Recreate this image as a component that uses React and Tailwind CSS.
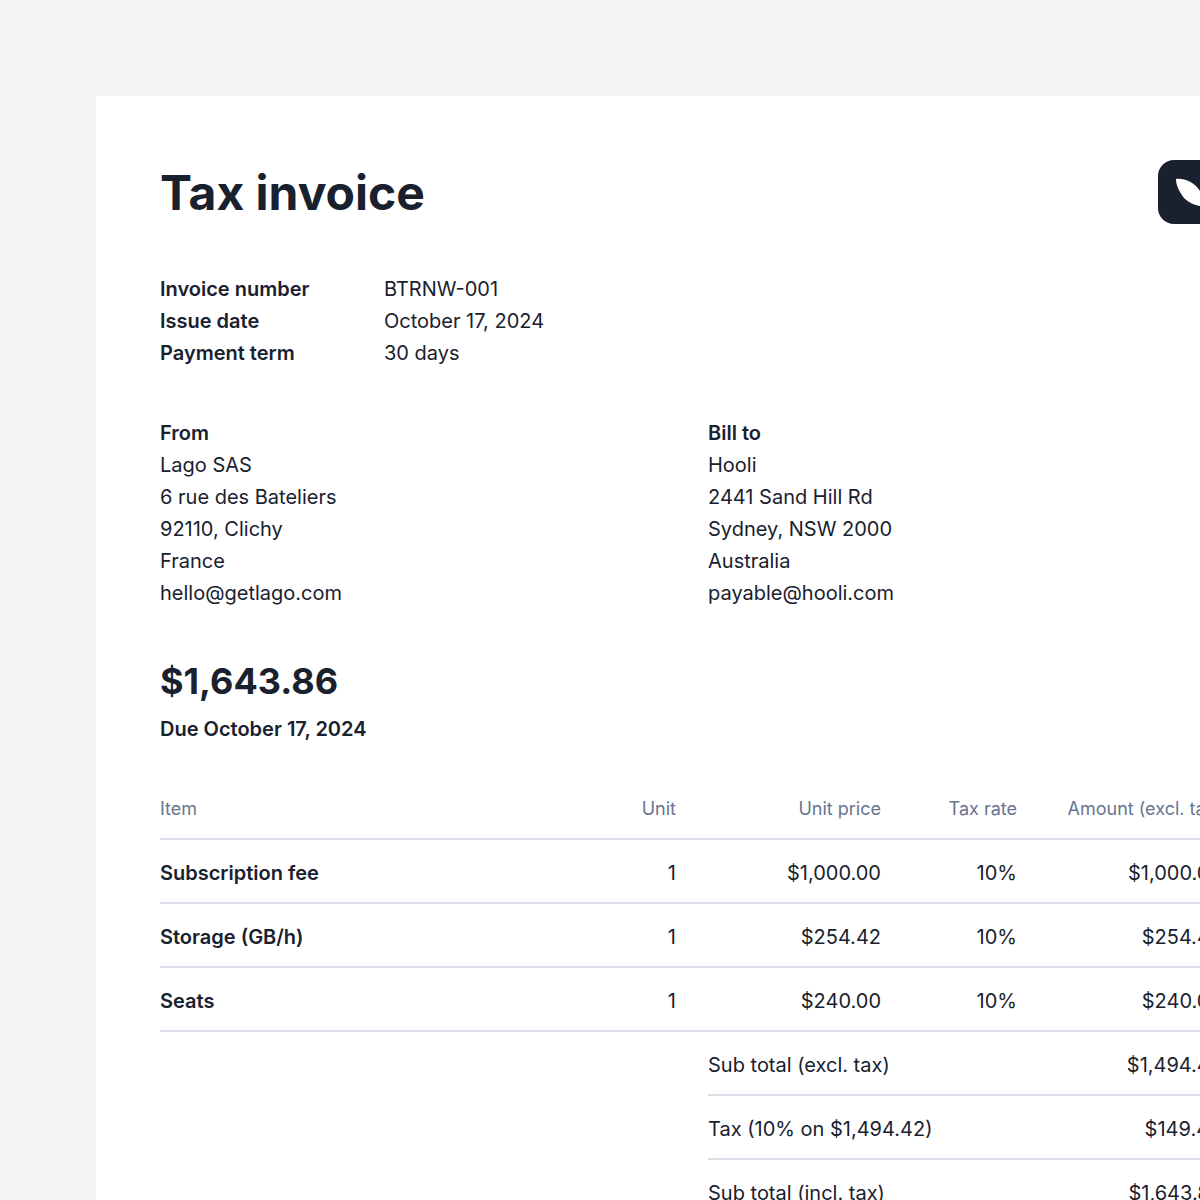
import React from 'react';

const font = { fontFamily: 'Inter, sans-serif' };

const meta = [
    { label: 'Invoice number', value: 'BTRNW-001' },
    { label: 'Issue date', value: 'October 17, 2024' },
    { label: 'Payment term', value: '30 days' },
];

const from = ['Lago SAS', '6 rue des Bateliers', '92110, Clichy', 'France', 'hello@getlago.com'];
const billTo = ['Hooli', '2441 Sand Hill Rd', 'Sydney, NSW 2000', 'Australia', 'payable@hooli.com'];

const items = [
    { name: 'Subscription fee', unit: '1', price: '$1,000.00', tax: '10%', amount: '$1,000.00' },
    { name: 'Storage (GB/h)', unit: '1', price: '$254.42', tax: '10%', amount: '$254.42' },
    { name: 'Seats', unit: '1', price: '$240.00', tax: '10%', amount: '$240.00' },
];

const totals = [
    { label: 'Sub total (excl. tax)', value: '$1,494.42' },
    { label: 'Tax (10% on $1,494.42)', value: '$149.44' },
    { label: 'Sub total (incl. tax)', value: '$1,643.86' },
];

const rowGrid = 'grid grid-cols-[516px_205px_136px_205px] items-center h-16 pt-1 border-b-2 border-[#d9e0e8]';

const Logo = () => (
    <svg width="64" height="64" viewBox="0 0 64 64" className="shrink-0">
        <rect width="64" height="64" rx="16" fill="#19212e" />
        <path d="M18 19C26 18 36 22 42 31C45 36 47 41 48 46C40 47 30 43 25 36.7C21 31 18 25 18 19Z" fill="#ffffff" />
    </svg>
);

const App = () => {
    return (
        <div className="h-[1200px] overflow-hidden bg-[#f3f5f7] pt-24 pl-24 text-xl leading-8 text-[#19212e]" style={font}>
            <div className="w-[1190px] min-h-[1200px] bg-white px-16 pt-16">
                {/* Header */}
                <div className="flex items-center justify-between h-16 mb-12">
                    <h1 className="text-5xl font-bold pt-0.5">Tax invoice</h1>
                    <Logo />
                </div>

                {/* Invoice details */}
                <div className="pt-px mb-[47px]">
                    {meta.map((row) => (
                        <div key={row.label} className="flex">
                            <div className="w-[224px] font-semibold">{row.label}</div>
                            <div>{row.value}</div>
                        </div>
                    ))}
                </div>

                {/* Addresses */}
                <div className="grid grid-cols-[548px_1fr] pt-px mb-[47px]">
                    <div>
                        <div className="font-semibold">From</div>
                        {from.map((line) => <div key={line}>{line}</div>)}
                    </div>
                    <div>
                        <div className="font-semibold">Bill to</div>
                        {billTo.map((line) => <div key={line}>{line}</div>)}
                    </div>
                </div>

                {/* Amount due */}
                <div className="text-4xl leading-[48px] font-bold pt-px mb-[7px]">$1,643.86</div>
                <div className="font-semibold pt-px mb-[31px]">Due October 17, 2024</div>

                {/* Line items */}
                <div className={`${rowGrid} text-lg text-[#66758f]`}>
                    <div className="flex justify-between">
                        <span>Item</span>
                        <span>Unit</span>
                    </div>
                    <div className="text-right">Unit price</div>
                    <div className="text-right">Tax rate</div>
                    <div className="text-right">Amount (excl. tax)</div>
                </div>
                {items.map((item) => (
                    <div key={item.name} className={rowGrid}>
                        <div className="flex justify-between">
                            <span className="font-semibold">{item.name}</span>
                            <span>{item.unit}</span>
                        </div>
                        <div className="text-right">{item.price}</div>
                        <div className="text-right">{item.tax}</div>
                        <div className="text-right">{item.amount}</div>
                    </div>
                ))}

                {/* Totals */}
                <div className="ml-[548px]">
                    {totals.map((row) => (
                        <div key={row.label} className="flex items-center justify-between h-16 pt-1 border-b-2 border-[#d9e0e8]">
                            <span>{row.label}</span>
                            <span>{row.value}</span>
                        </div>
                    ))}
                </div>
            </div>
        </div>
    );
};

export default App;
